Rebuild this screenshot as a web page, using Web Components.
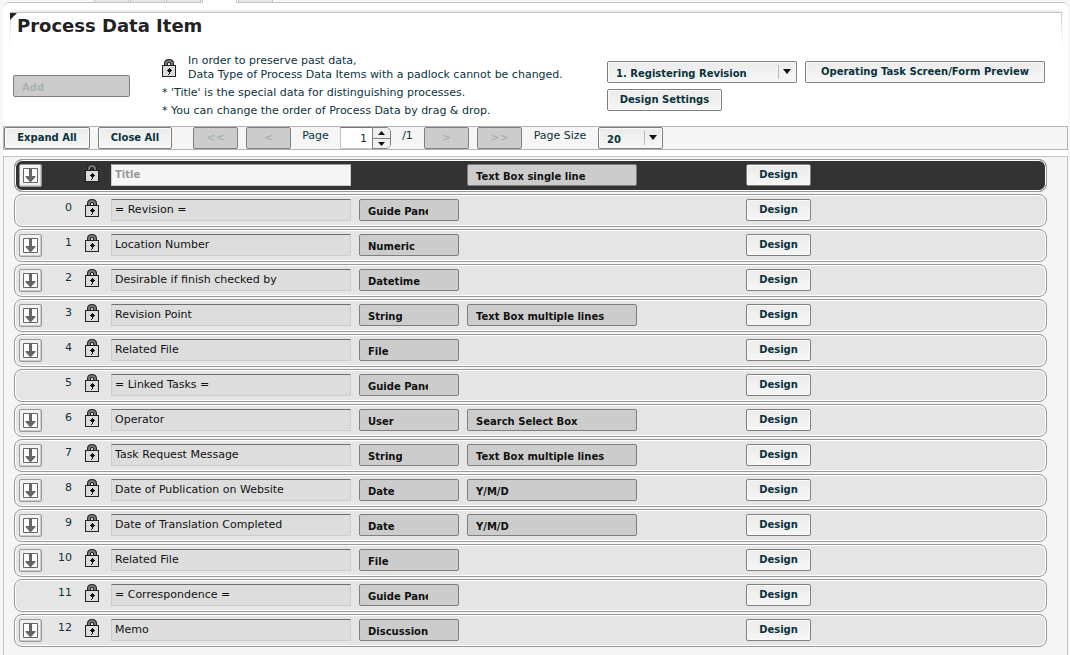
<!DOCTYPE html>
<html lang="en">
<head>
<meta charset="utf-8">
<title>Process Data Item</title>
<style>
  html, body { margin: 0; }
  body {
    background: #f7f7f7;
    color: #0b333c;
    font: 11px/14px Verdana, "DejaVu Sans", sans-serif;
  }
</style>
</head>
<body>
<process-page></process-page>

<script>
const define = (name, html, setup) => {
  const template = document.createElement('template');
  template.innerHTML = html;
  customElements.define(name, class extends HTMLElement {
    constructor() {
      super();
      this.attachShadow({ mode: 'open' }).append(template.content.cloneNode(true));
    }
    connectedCallback() {
      if (setup) setup(this, this.shadowRoot);
    }
  });
};

define('lock-icon', `
  <style>
    :host { display: block; width: 14px; height: 18px; }
    svg { display: block; }
  </style>
  <svg width="14" height="18" viewBox="0 0 14 18" aria-hidden="true">
    <path d="M4 7V4.500Q4 2 7 2T10 4.500V7" fill="none" stroke="#222" stroke-width="4"/>
    <path d="M4 7V4.500Q4 2 7 2T10 4.500V7" fill="none" stroke="#777" stroke-width="2"/>
    <rect x="0.5" y="6.5" width="13" height="11" fill="#dcdcdc" stroke="#222"/>
    <path d="M7 9h1v1h1v1h1v1H9v1H8v2H7v1H6v-1h1v-2H6v-1H5v-1h1v-1h1z" fill="#111"/>
  </svg>`);

define('push-button', `
  <style>
    :host { display: block; }
    button {
      box-sizing: border-box; display: block; width: 100%; height: 22px;
      margin: 0; padding: 0 0 1px;
      border: 1px solid #7f7f7f; border-radius: 2px;
      background: linear-gradient(#ebebeb, #f6f6f6);
      box-shadow: inset 0 0 0 1px #fafafa;
      color: #0b333c; font: bold 10px/14px Verdana, "DejaVu Sans", sans-serif;
      white-space: nowrap;
    }
    button:disabled {
      background: #ccc; box-shadow: none; color: #aab3b3;
    }
    :host([align="start"]) button { text-align: left; padding: 3px 8px 0; }
    :host([glyph]) button { font-size: 11px; }
  </style>
  <button type="button"><slot></slot></button>`,
  (host, root) => {
    root.querySelector('button').disabled = host.hasAttribute('disabled');
  });

define('drop-down', `
  <style>
    :host { display: block; position: relative; }
    select {
      appearance: none; box-sizing: border-box; display: block;
      width: 100%; height: 22px; margin: 0; padding: 3px 30px 0 8px;
      border: 1px solid #7f7f7f; border-radius: 2px;
      background: linear-gradient(#ebebeb, #f6f6f6);
      box-shadow: inset 0 0 0 1px #fafafa;
      color: #0b333c; font: bold 10px/14px Verdana, "DejaVu Sans", sans-serif;
      opacity: 1; text-overflow: clip;
    }
    select:disabled { background: #ccc; box-shadow: none; color: #111; }
    svg { position: absolute; top: 4px; right: 4px; pointer-events: none; }
    :host([disabled]) svg { display: none; }
  </style>
  <select><option></option></select>
  <svg width="15" height="14" viewBox="0 0 15 14" aria-hidden="true">
    <path d="M0.500 0v14" stroke="#bbb"/>
    <path d="M5 4h8L9 9z" fill="#111"/>
  </svg>`,
  (host, root) => {
    const select = root.querySelector('select');
    select.disabled = host.hasAttribute('disabled');
    select.setAttribute('aria-label', host.getAttribute('label'));
    root.querySelector('option').textContent = host.getAttribute('value');
  });

define('page-stepper', `
  <style>
    :host { display: grid; grid-template-columns: 32px 19px; height: 22px; }
    input {
      appearance: textfield; box-sizing: border-box; width: 32px; height: 22px;
      margin: 0; padding: 0 5px 0 0;
      border: 1px solid #c4c4c4; border-top-color: #6f7777; border-right: 0; border-radius: 0;
      background: #fff; color: #0b333c; text-align: right;
      font: 11px/14px Verdana, "DejaVu Sans", sans-serif;
    }
    input::-webkit-inner-spin-button { appearance: none; margin: 0; }
    div {
      box-sizing: border-box; display: grid; grid-template-rows: 1fr 1fr;
      border: 1px solid #7f7f7f; border-radius: 0 5px 5px 0; overflow: hidden;
    }
    button {
      display: grid; place-items: center; margin: 0; padding: 0;
      border: 0; background: #f0f0f0;
    }
    button + button { border-top: 1px solid #7f7f7f; }
  </style>
  <input type="number" value="1" aria-label="Page">
  <div>
    <button type="button" aria-label="Next page"><svg width="7" height="4"><path d="M0 4h7L3.500 0z" fill="#111"/></svg></button>
    <button type="button" aria-label="Previous page"><svg width="7" height="4"><path d="M0 0h7L3.500 4z" fill="#111"/></svg></button>
  </div>`);

define('tab-strip', `
  <style>
    :host { display: flex; gap: 1px; height: 2px; padding-left: 94px; }
    span { width: 35px; background: #e6e6e6; border: solid #c4c4c4; border-width: 0 1px; box-sizing: border-box; }
    .active { background: #fff; height: 3px; position: relative; }
  </style>
  <span></span><span></span><span></span><span class="active"></span><span></span>`);

define('panel-heading', `
  <style>
    :host {
      display: block; height: 35px; margin: 9px 6px 0 7px;
      border-top: 1px solid #c4c4c4;
      box-shadow: 0 -2px 3px -1px #ddd;
      background:
        linear-gradient(#ccc, #fff) 0 0 / 1px 28px no-repeat,
        linear-gradient(#ccc, #fff) 100% 0 / 1px 28px no-repeat,
        #fff;
    }
    .row { display: flex; }
    svg { flex: none; width: 7px; height: 7px; }
    h1 { margin: 2px 0 0; color: #222; font: bold 18px/22px Verdana, "DejaVu Sans", sans-serif; }
  </style>
  <div class="row">
    <svg viewBox="0 0 7 7" aria-hidden="true"><path d="M0 0h7L0 7z" fill="#222"/></svg>
    <h1><slot></slot></h1>
  </div>`);

define('item-intro', `
  <style>
    :host {
      display: grid; grid-template-columns: 149px 1fr 439px;
      height: 78px; padding: 0 22px 0 10px;
    }
    .add { width: 117px; margin-top: 27px; }
    .note { display: flex; gap: 12px; margin-top: 6px; }
    .note lock-icon { margin-top: 5px; }
    p { margin: 0; white-space: nowrap; }
    .notes p + p, .rule { margin-top: 4px; }
    .actions { display: flex; flex-wrap: wrap; align-content: flex-start; gap: 6px 8px; padding-top: 13px; }
    .form { width: 190px; }
    .preview { width: 240px; }
    .settings { width: 115px; }
  </style>
  <push-button class="add" align="start" disabled>Add</push-button>
  <div class="notes">
    <div class="note">
      <lock-icon></lock-icon>
      <p>In order to preserve past data,<br>Data Type of Process Data Items with a padlock cannot be changed.</p>
    </div>
    <p class="rule">* 'Title' is the special data for distinguishing processes.</p>
    <p>* You can change the order of Process Data by drag &amp; drop.</p>
  </div>
  <div class="actions">
    <drop-down class="form" label="Task" value="1. Registering Revision"></drop-down>
    <push-button class="preview">Operating Task Screen/Form Preview</push-button>
    <push-button class="settings">Design Settings</push-button>
  </div>`);

define('page-toolbar', `
  <style>
    :host {
      display: flex; gap: 8px; height: 22px;
      border: 1px solid #b3b3b3; background: #f5f5f5;
    }
    .expand { width: 86px; }
    .close { width: 74px; }
    .first { margin-left: 13px; }
    .nav { width: 45px; }
    span { margin-top: 2px; text-align: center; white-space: nowrap; }
    .page { width: 33px; }
    .total { width: 17px; }
    .size { width: 60px; }
    .rows { width: 65px; }
  </style>
  <push-button class="expand">Expand All</push-button>
  <push-button class="close">Close All</push-button>
  <push-button class="nav first" glyph disabled>&lt;&lt;</push-button>
  <push-button class="nav" glyph disabled>&lt;</push-button>
  <span class="page">Page</span>
  <page-stepper></page-stepper>
  <span class="total">/1</span>
  <push-button class="nav" glyph disabled>&gt;</push-button>
  <push-button class="nav" glyph disabled>&gt;&gt;</push-button>
  <span class="size">Page Size</span>
  <drop-down class="rows" label="Page Size" value="20"></drop-down>`);

define('data-item', `
  <style>
    :host {
      box-sizing: border-box; display: grid; height: 33px; align-items: start;
      grid-template-columns: 23px 30px 39px 248px 108px 279px 65px;
      padding: 4px 4px 0;
      border: 1px solid #999; border-radius: 8px;
      background: #e5e5e5; box-shadow: inset 0 0 0 1px #fff;
    }
    :host([heading]) { background: #333; }
    .move {
      display: grid; place-items: center; width: 23px; height: 23px;
      margin: 0; padding: 0; border: 1px solid #999; border-radius: 2px;
      background: #f2f2f2; box-shadow: inset -1px -1px 0 #ccc; box-sizing: border-box;
    }
    .number { margin-top: 2px; text-align: right; }
    lock-icon { justify-self: center; }
    input {
      box-sizing: border-box; width: 240px; height: 22px; margin: 0; padding: 0 3px 1px;
      border: 1px solid #ccc; border-top-color: #6f6f6f; border-radius: 0;
      background: #ddd; color: #111; font: 11px/14px Verdana, "DejaVu Sans", sans-serif;
    }
    input:disabled {
      background: #f5f5f5; color: #999; border-top-color: #999;
      font-size: 10px; font-weight: bold;
    }
    .type { width: 100px; }
    .form { width: 170px; }
    .move[hidden] { visibility: hidden; }
  </style>
  <button class="move" type="button" aria-label="Insert below">
    <svg width="15" height="15" viewBox="0 0 15 15" aria-hidden="true">
      <path d="M0.500 0.500h14v14h-14z" fill="#fff" stroke="#666"/>
      <path d="M6 1h3v7h3.500v1L8 14H7L2.500 9V8H6z" fill="#666"/>
    </svg>
  </button>
  <span class="number"></span>
  <lock-icon></lock-icon>
  <input type="text" aria-label="Name">
  <drop-down class="type" label="Data Type" disabled></drop-down>
  <drop-down class="form" label="Display Type" disabled></drop-down>
  <push-button>Design</push-button>`,
  (host, root) => {
    const get = name => host.getAttribute(name) || '';
    root.querySelector('.number').textContent = get('number');
    const input = root.querySelector('input');
    input.value = get('name');
    input.readOnly = true;
    input.disabled = host.hasAttribute('heading');
    root.querySelector('.move').hidden = host.hasAttribute('fixed');
    for (const part of ['type', 'form']) {
      const list = root.querySelector('.' + part);
      if (get(part)) {
        list.setAttribute('value', get(part));
        list.shadowRoot.querySelector('option').textContent = get(part);
      } else {
        list.replaceWith(document.createElement('span'));
      }
    }
  });

define('item-list', `
  <style>
    :host {
      display: flex; flex-direction: column; gap: 2px; flex: 1;
      margin-top: 6px; padding: 2px 20px 6px 10px;
      border: 1px solid #c4c4c4; border-bottom: 0; background: #f5f5f5;
    }
  </style>
  <slot></slot>`);

define('process-page', `
  <style>
    :host { display: flex; flex-direction: column; min-height: 100vh; }
    main {
      flex: 1; display: flex; flex-direction: column;
      margin: 0 2px 0 3px; border-top: 1px solid #c4c4c4;
      border-radius: 6px 6px 0 0; background: #fff;
    }
  </style>
  <tab-strip></tab-strip>
  <main>
    <panel-heading>Process Data Item</panel-heading>
    <item-intro></item-intro>
    <page-toolbar></page-toolbar>
    <item-list>
      <data-item heading name="Title" form="Text Box single line"></data-item>
      <data-item fixed number="0" name="= Revision =" type="Guide Panel"></data-item>
      <data-item number="1" name="Location Number" type="Numeric"></data-item>
      <data-item number="2" name="Desirable if finish checked by" type="Datetime"></data-item>
      <data-item number="3" name="Revision Point" type="String" form="Text Box multiple lines"></data-item>
      <data-item number="4" name="Related File" type="File"></data-item>
      <data-item fixed number="5" name="= Linked Tasks =" type="Guide Panel"></data-item>
      <data-item number="6" name="Operator" type="User" form="Search Select Box"></data-item>
      <data-item number="7" name="Task Request Message" type="String" form="Text Box multiple lines"></data-item>
      <data-item number="8" name="Date of Publication on Website" type="Date" form="Y/M/D"></data-item>
      <data-item number="9" name="Date of Translation Completed" type="Date" form="Y/M/D"></data-item>
      <data-item number="10" name="Related File" type="File"></data-item>
      <data-item fixed number="11" name="= Correspondence =" type="Guide Panel"></data-item>
      <data-item number="12" name="Memo" type="Discussion"></data-item>
    </item-list>
  </main>`);
</script>
</body>
</html>
